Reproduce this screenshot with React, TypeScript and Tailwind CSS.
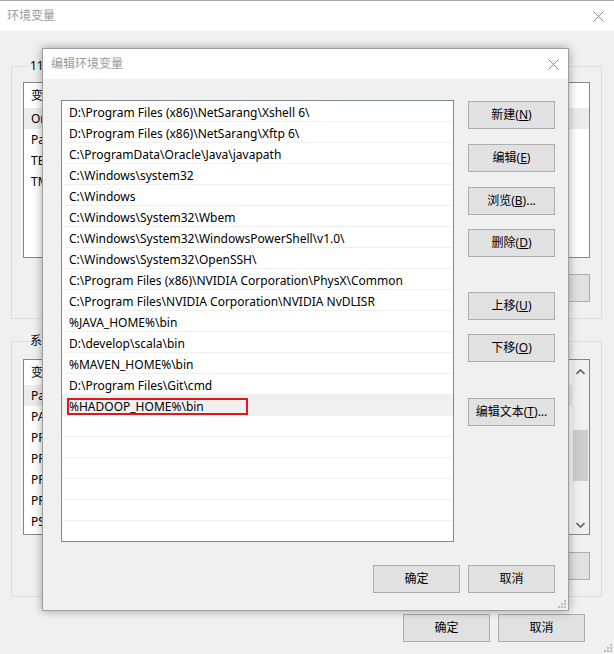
import React from 'react';

const font = "font-['Noto_Sans','Noto_Sans_CJK_SC',sans-serif]";

const paths = [
  'D:\\Program Files (x86)\\NetSarang\\Xshell 6\\',
  'D:\\Program Files (x86)\\NetSarang\\Xftp 6\\',
  'C:\\ProgramData\\Oracle\\Java\\javapath',
  'C:\\Windows\\system32',
  'C:\\Windows',
  'C:\\Windows\\System32\\Wbem',
  'C:\\Windows\\System32\\WindowsPowerShell\\v1.0\\',
  'C:\\Windows\\System32\\OpenSSH\\',
  'C:\\Program Files (x86)\\NVIDIA Corporation\\PhysX\\Common',
  'C:\\Program Files\\NVIDIA Corporation\\NVIDIA NvDLISR',
  '%JAVA_HOME%\\bin',
  'D:\\develop\\scala\\bin',
  '%MAVEN_HOME%\\bin',
  'D:\\Program Files\\Git\\cmd',
];

const userVars = ['OneDrive', 'Path', 'TEMP', 'TMP'];
const sysVars = ['Path', 'PATHEXT', 'PROCESSOR_ARCHITECTURE', 'PROCESSOR_IDENTIFIER', 'PROCESSOR_LEVEL', 'PROCESSOR_REVISION', 'PSModulePath'];

const Btn = ({ label, hot, tail = '', className = '' }: { label: string; hot: string; tail?: string; className?: string }) => (
  <button className={`flex h-[28px] w-[87px] items-center justify-center border border-[#adadad] bg-[#e1e1e1] text-[12px] leading-[16px] text-black ${className}`}>
    {label}(<span className="underline underline-offset-1">{hot}</span>){tail}
  </button>
);

const PlainBtn = ({ label, className = '' }: { label: string; className?: string }) => (
  <button className={`flex h-[28px] w-[87px] items-center justify-center border border-[#adadad] bg-[#e1e1e1] text-[12px] leading-[16px] text-black ${className}`}>
    {label}
  </button>
);

const CloseX = ({ color = '#8c8c8c' }: { color?: string }) => (
  <svg width="11" height="11" viewBox="0 0 11 11">
    <path d="M0.5 0.5 L10.5 10.5 M10.5 0.5 L0.5 10.5" stroke={color} strokeWidth="1" />
  </svg>
);

const Grip = () => (
  <svg width="9" height="9" viewBox="0 0 9 9">
    {[
      [7, 1],
      [4, 4],
      [7, 4],
      [1, 7],
      [4, 7],
      [7, 7],
    ].map(([x, y], i) => (
      <rect key={i} x={x} y={y} width="2" height="2" fill="#bcbcbc" />
    ))}
  </svg>
);

const VarList = ({ rows, selected, scroll }: { rows: string[]; selected: number; scroll?: boolean }) => (
  <div className="flex h-[176px] w-[567px] border border-[#828790] bg-white">
    <div className="flex-1 overflow-hidden">
      <div className="flex h-[25px] items-center pl-[7px] text-[12px] leading-[16px]">变量</div>
      {rows.map((r, i) => (
        <div key={r + i} className={`flex h-[21px] items-center pl-[7px] text-[12px] leading-[16px] ${i === selected ? 'bg-[#ececec]' : ''}`}>
          {r}
        </div>
      ))}
    </div>
    {scroll && (
      <div className="flex w-[17px] flex-col items-center bg-[#f0f0f0]">
        <svg className="mt-[9px]" width="9" height="6" viewBox="0 0 9 6">
          <path d="M0.5 5 L4.5 1 L8.5 5" stroke="#606060" strokeWidth="1.6" fill="none" />
        </svg>
        <div className="mt-[55px] h-[51px] w-[15px] bg-[#cdcdcd]" />
        <svg className="mt-[41px]" width="9" height="6" viewBox="0 0 9 6">
          <path d="M0.5 1 L4.5 5 L8.5 1" stroke="#606060" strokeWidth="1.6" fill="none" />
        </svg>
      </div>
    )}
  </div>
);

export default function App() {
  return (
    <div className={`relative h-[654px] w-[614px] overflow-hidden bg-[#f0f0f0] text-black ${font}`}>
      {/* 环境变量 window (behind) */}
      <div className="flex h-[31px] items-center justify-between border-t border-[#a8a8a8] bg-white pl-[7px] pr-[10px]">
        <span className="text-[12px] text-[#9a9a9a]">环境变量</span>
        <CloseX />
      </div>

      <fieldset className="ml-[11px] mt-[27px] w-[591px] border border-[#dcdcdc] pb-[16px] pl-[11px] pr-[11px] pt-[8px]">
        <legend className="ml-[6px] px-[1px] text-[12px] leading-[16px]">11424 的用户变量(U)</legend>
        <VarList rows={userVars} selected={0} />
        <div className="mt-[16px] flex justify-end gap-[9px]">
          <PlainBtn label="新建(N)..." />
          <PlainBtn label="编辑(E)..." />
          <PlainBtn label="删除(D)" />
        </div>
      </fieldset>

      <fieldset className="ml-[11px] mt-[14px] w-[591px] border border-[#dcdcdc] pb-[16px] pl-[11px] pr-[11px] pt-[10px]">
        <legend className="ml-[6px] px-[1px] text-[12px] leading-[16px]">系统变量(S)</legend>
        <VarList rows={sysVars} selected={0} scroll />
        <div className="mt-[17px] flex justify-end gap-[9px]">
          <PlainBtn label="新建(W)..." />
          <PlainBtn label="编辑(I)..." />
          <PlainBtn label="删除(L)" />
        </div>
      </fieldset>

      <div className="mt-[17px] flex justify-end gap-[8px] pr-[29px]">
        <PlainBtn label="确定" />
        <PlainBtn label="取消" />
      </div>
      <div className="absolute bottom-[2px] right-[2px]">
        <Grip />
      </div>

      {/* 编辑环境变量 dialog (on top) */}
      <div className="absolute left-[42px] top-[48px] flex h-[563px] w-[527px] flex-col border border-[#9f9f9f] bg-[#f0f0f0] shadow-[0_0_9px_rgba(0,0,0,0.35)]">
        <div className="flex h-[30px] items-center justify-between bg-white pl-[8px] pr-[9px]">
          <span className="text-[12px] text-[#9a9a9a]">编辑环境变量</span>
          <CloseX />
        </div>
        <div className="flex flex-1 flex-col pl-[18px] pr-[13px] pt-[21px]">
          <div className="flex gap-[14px]">
            <div className="h-[442px] w-[393px] overflow-hidden border border-[#828790] bg-white">
              {paths.map((p) => (
                <div key={p} className="flex h-[21px] items-center border-b border-[#f0f0f0] pl-[7px] pt-[4px] text-[12px] leading-[16px]">
                  {p}
                </div>
              ))}
              <div className="flex h-[21px] items-center border-b border-[#f0f0f0] bg-[#f0f0f0] pl-[5px] pt-[3px] text-[12px]">
                <span className="flex h-[17px] w-[181px] items-center border-2 border-[#e0181e] leading-[12px]">%HADOOP_HOME%\bin</span>
              </div>
              {[0, 1, 2, 3, 4, 5].map((i) => (
                <div key={i} className="h-[21px] border-b border-[#f0f0f0]" />
              ))}
            </div>
            <div className="flex flex-col pt-[1px]">
              <Btn label="新建" hot="N" />
              <Btn label="编辑" hot="E" className="mt-[15px]" />
              <Btn label="浏览" hot="B" tail="..." className="mt-[15px]" />
              <Btn label="删除" hot="D" className="mt-[14px]" />
              <Btn label="上移" hot="U" className="mt-[35px]" />
              <Btn label="下移" hot="O" className="mt-[14px]" />
              <Btn label="编辑文本" hot="T" tail="..." className="mt-[36px]" />
            </div>
          </div>
          <div className="mt-[23px] flex justify-end gap-[8px]">
            <PlainBtn label="确定" />
            <PlainBtn label="取消" />
          </div>
        </div>
        <div className="absolute bottom-[2px] right-[2px]">
          <Grip />
        </div>
      </div>
    </div>
  );
}
